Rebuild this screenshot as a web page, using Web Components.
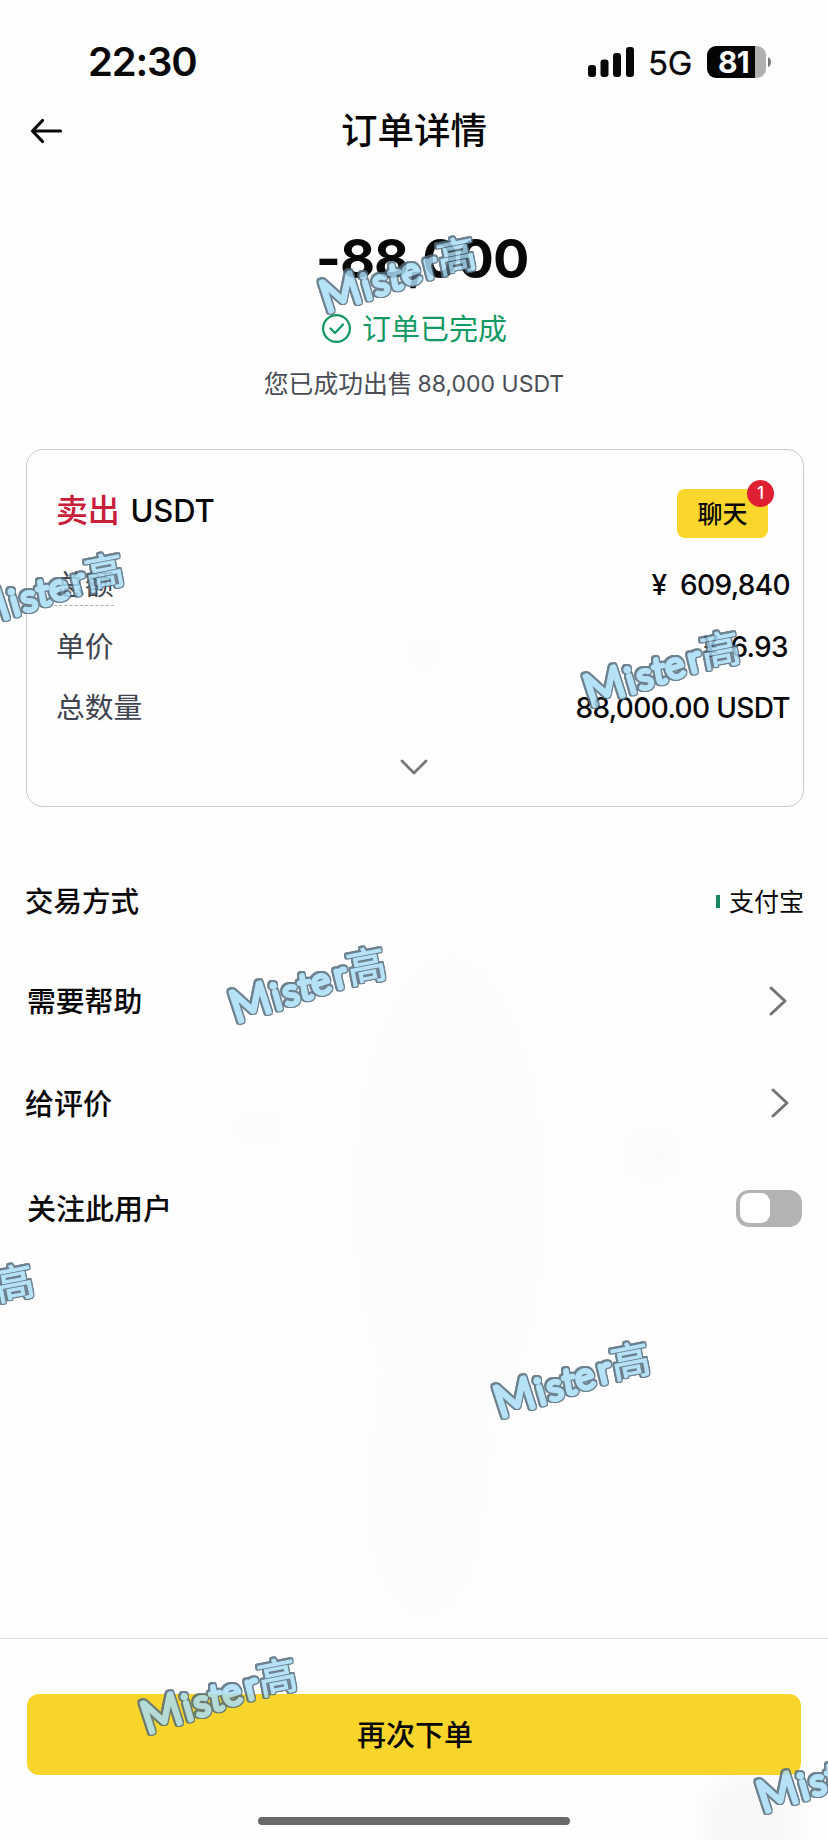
<!DOCTYPE html>
<html lang="zh-CN">
<head>
<meta charset="utf-8">
<title>订单详情</title>
<style>
html,body{margin:0;padding:0;background:#fefefe}
body{width:828px;height:1840px;overflow:hidden;font-family:Inter,"Noto Sans CJK SC",sans-serif;color:#080808}
</style>
</head>
<body>
<order-page></order-page>
<script>
const define = (name, html, setup) => {
  const template = document.createElement('template');
  template.innerHTML = html;
  customElements.define(name, class extends HTMLElement {
    constructor() {
      super();
      this.attachShadow({mode: 'open'}).append(template.content.cloneNode(true));
    }
    connectedCallback() { if (setup) setup(this, this.shadowRoot); }
  });
};

define('status-bar', `
<style>
:host{display:flex;height:96px;box-sizing:border-box;padding:27px 56px 0 88px;justify-content:space-between;align-items:center}
.time{font-size:40px;font-weight:600;letter-spacing:-1.2px;line-height:50px}
.right{display:flex;align-items:center}
.net{font-size:33px;line-height:40px;margin:2px 15px 0 14px;letter-spacing:-.4px;-webkit-text-stroke:.3px}
.bat{display:flex;align-items:center}
.cell{width:59px;height:32px;border-radius:9px;box-sizing:border-box;padding-left:11px;background:linear-gradient(90deg,#050505 48px,#b0b0b0 48px);color:#fff;font-size:30px;font-weight:700;line-height:32px;letter-spacing:-.8px}
svg{display:block}
</style>
<span class="time">22:30</span>
<div class="right">
<svg width="46" height="30" viewBox="0 0 46 30"><g fill="#080808"><rect y="18" width="8" height="12" rx="3"/><rect x="12.5" y="12.5" width="8" height="17.5" rx="3"/><rect x="25" y="6" width="8" height="24" rx="3"/><rect x="38" y="0" width="8" height="30" rx="3"/></g></svg>
<span class="net">5G</span>
<div class="bat"><div class="cell">81</div><svg width="6" height="12" viewBox="0 0 6 12"><path d="M2 1Q5 2.5 5 6T2 11Z" fill="#777"/></svg></div>
</div>`);

define('nav-header', `
<style>
:host{display:grid;grid-template-columns:62px 1fr 62px;height:70px;align-items:center}
svg{display:block;margin-left:30px}
h1{margin:0;text-align:center;font-size:36.5px;font-weight:500;line-height:50px}
</style>
<svg width="34" height="28" viewBox="0 0 34 28" fill="none" stroke="#080808" stroke-width="3.2" stroke-linecap="round" stroke-linejoin="round"><path d="M30.5 14H3M12.5 3.5L2.5 14L12.5 24.5"/></svg>
<h1><slot></slot></h1>`);

define('order-summary', `
<style>
:host{display:flex;flex-direction:column;align-items:center;height:283px;box-sizing:border-box;padding-top:60px}
.amount{font-size:54px;font-weight:700;line-height:66px;letter-spacing:-1.1px;padding-left:16px}
.state{display:flex;align-items:center;gap:10px;margin-top:16px;height:40px;color:#139963;font-size:29px}
.state span{padding-bottom:3px}
.note{display:flex;align-items:center;gap:5px;color:#4a4d55;margin-top:16px;height:40px;font-size:24.8px}
.note span{padding-bottom:4px}
.note ::slotted(span){font-size:23px}
svg{display:block}
</style>
<div class="amount"><slot name="amount"></slot></div>
<div class="state"><svg width="31" height="31" viewBox="0 0 31 31" fill="none" stroke="#139963" stroke-width="2.3" stroke-linecap="round" stroke-linejoin="round"><circle cx="15.5" cy="15.5" r="13.4"/><path d="M9.5 15.5L14 20L22 11.5"/></svg><span><slot name="state"></slot></span></div>
<div class="note"><span><slot></slot></span><slot name="sum"></slot></div>`);

define('chat-button', `
<style>
:host{display:block;position:relative;width:91px;height:49px;border-radius:8px;background:#fbd62c;text-align:center;font-size:25px;font-weight:500;line-height:50px}
i{position:absolute;right:-6px;top:-9px;width:27px;height:27px;border-radius:50%;background:#df1f32;color:#fff;font:500 17px/27px Inter,sans-serif}
</style>
<slot></slot><i>1</i>`);

define('trade-row', `
<style>
:host{display:flex;height:61.5px;align-items:center;justify-content:space-between;font-size:28.8px}
.label{color:#40444e;line-height:42px}
:host([dashed]) .label{box-sizing:border-box;height:42px;border-bottom:1.5px dashed #aaa;margin-left:-2px;padding-left:2px}
.value{font-size:28px;font-weight:500;white-space:pre;letter-spacing:-.65px}
</style>
<span class="label"><slot></slot></span><span class="value"><slot name="value"></slot></span>`);

define('trade-card', `
<style>
:host{display:block;box-sizing:border-box;width:778px;height:358px;margin-left:26px;border:1.5px solid #c9c9c9;border-radius:17px;padding:32px 13px 0 29px}
.head{display:flex;align-items:center;justify-content:space-between;height:72px;padding:0 22px 0 0;margin-bottom:.5px}
.title{display:flex;align-items:center;gap:11px;font-size:31px;font-weight:500;letter-spacing:-.2px;padding-bottom:15px}
.title b{font-weight:500;font-size:32px;color:#c8203a;margin-top:-6px}
svg{display:block;margin:19px auto 0 343px}
chat-button{margin-top:-10px}
</style>
<div class="head"><div class="title"><b><slot name="side"></slot></b><slot name="coin"></slot></div><chat-button>聊天</chat-button></div>
<slot></slot>
<svg width="30" height="18" viewBox="0 0 30 18" fill="none" stroke="#777" stroke-width="2.8" stroke-linecap="round" stroke-linejoin="round"><path d="M3 3L15 15L27 3"/></svg>`);

define('menu-row', `
<style>
:host{display:flex;align-items:center;justify-content:space-between;font-size:28.5px;font-weight:500;box-sizing:border-box;height:104px;padding:0 24px 0 25px}
span{padding-bottom:3px}
</style>
<span><slot></slot></span><slot name="end"></slot>`);

define('pay-method', `
<style>
:host{display:flex;align-items:center;gap:9px;font-size:25px;font-weight:400}
i{width:4px;height:13px;background:#158661}
span{padding-bottom:3px}
</style><i></i><span><slot></slot></span>`);

define('chevron-right', `
<style>:host{display:block;margin-right:16px}svg{display:block}</style>
<svg width="20" height="32" viewBox="0 0 20 32" fill="none" stroke="#747474" stroke-width="3" stroke-linecap="round" stroke-linejoin="round"><path d="M3 3L17 16L3 29"/></svg>`);

define('toggle-switch', `
<style>
:host{display:flex;box-sizing:border-box;width:66px;height:37px;padding:3.5px 4px;border-radius:13px;background:#b2b3b3;margin-right:2px}
i{width:30px;height:30px;border-radius:9px;background:#fff}
</style><i></i>`);

define('bottom-bar', `
<style>
:host{display:flex;flex-direction:column;align-items:center;box-sizing:border-box;height:202px;border-top:1.5px solid #ddd;padding-top:54.5px}
button{width:774px;height:81px;border:0;border-radius:12px;background:#f8d52b;font:500 29px/83px Inter,"Noto Sans CJK SC",sans-serif;color:#080808;padding:0 0 0 2px}
i{width:312px;height:8px;border-radius:4px;background:#68686a;margin-top:42px}
</style>
<button><slot></slot></button><i></i>`);

define('water-mark', `
<style>
:host{display:block;position:absolute;width:162px;height:86px;opacity:.84;pointer-events:none}
svg{display:block;overflow:visible;filter:drop-shadow(1.1px 0 0 #536a7a) drop-shadow(-1.1px 0 0 #536a7a) drop-shadow(0 1.1px 0 #536a7a) drop-shadow(0 -1.1px 0 #536a7a)}
text{fill:#a9ddf8;stroke:#a9ddf8;stroke-width:4.4px;stroke-linejoin:round;stroke-linecap:round;font-family:Lato,sans-serif;font-weight:300}
.cap{font-size:44px}.low{font-size:36px}.han{font-family:"Noto Sans CJK SC",sans-serif;font-size:39px;font-weight:400;stroke-width:1.2px}
</style>
<svg width="162" height="86" viewBox="0 0 162 86"><text><tspan class="cap" x="6" y="81" rotate="-18">M</tspan><tspan class="low" x="46 56 71 85 107" y="68 64 58 54 47" rotate="-16 -14 -10 -18 -14">ister</tspan><tspan class="han" x="120" y="42" rotate="-11">高</tspan></text></svg>`,
(host) => {
  host.style.left = host.getAttribute('x') + 'px';
  host.style.top = host.getAttribute('y') + 'px';
});

define('order-page', `
<style>
:host{display:flex;flex-direction:column;position:relative;width:828px;height:1840px;overflow:hidden;
background:
radial-gradient(ellipse 60px 45px at 258px 1128px,#fafcfb,transparent),
radial-gradient(ellipse 55px 50px at 652px 1155px,#f9fbfb,transparent),
radial-gradient(ellipse 40px 40px at 424px 655px,#fafcfc,transparent),
radial-gradient(ellipse 130px 330px at 450px 1200px,#fafbfb 40%,transparent),
radial-gradient(ellipse 80px 160px at 425px 1500px,#fafbfb 40%,transparent),
radial-gradient(ellipse 65px 70px at 750px 1825px,#f8f8f9 50%,transparent),
#fefefe}
main{display:flex;flex-direction:column;flex:1}
.menu{display:flex;flex-direction:column;padding-top:45px}
.unit{padding-right:2px}.unit b{font-weight:500;margin-right:6px}
.pay{height:98px}.help{height:101px;padding-left:27px;font-size:28.8px}.rate{height:104px;font-size:29px}.rate chevron-right{margin-right:14px}.follow{height:106px;padding-left:27px;font-size:29px}
</style>
<status-bar></status-bar>
<nav-header>订单详情</nav-header>
<main>
<order-summary><span slot="amount">-88,000</span><span slot="state">订单已完成</span>您已成功出售<span slot="sum">88,000 USDT</span></order-summary>
<trade-card><span slot="side">卖出</span><span slot="coin">USDT</span>
<trade-row dashed>总额<span slot="value">¥&nbsp; 609,840</span></trade-row>
<trade-row>单价<span slot="value" class="unit"><b>¥</b> 6.93</span></trade-row>
<trade-row>总数量<span slot="value">88,000.00 USDT</span></trade-row>
</trade-card>
<div class="menu">
<menu-row class="pay">交易方式<pay-method slot="end">支付宝</pay-method></menu-row>
<menu-row class="help">需要帮助<chevron-right slot="end"></chevron-right></menu-row>
<menu-row class="rate">给评价<chevron-right slot="end"></chevron-right></menu-row>
<menu-row class="follow">关注此用户<toggle-switch slot="end"></toggle-switch></menu-row>
</div>
</main>
<bottom-bar>再次下单</bottom-bar>
<water-mark x="320" y="232"></water-mark>
<water-mark x="-32" y="548"></water-mark>
<water-mark x="584" y="626"></water-mark>
<water-mark x="230" y="942"></water-mark>
<water-mark x="-122" y="1259"></water-mark>
<water-mark x="494" y="1337"></water-mark>
<water-mark x="141" y="1653"></water-mark>
<water-mark x="757" y="1732"></water-mark>`);
</script>
</body>
</html>
